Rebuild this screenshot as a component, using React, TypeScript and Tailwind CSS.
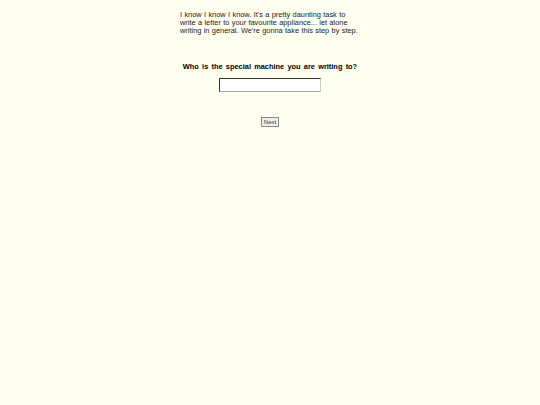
export default function App() {
  return (
    <div className="min-h-[405px] bg-[#fffff0] pt-[11px] font-['Liberation_Sans',Arial,sans-serif] text-black">
      <p className="mx-auto w-[180px] text-[7.4px] leading-[8px] text-[#222] [word-spacing:0.3px]">
        I know I know I know. It's a pretty daunting task to write a letter to your favourite appliance... let alone writing in general. We're gonna take this step by step.
      </p>
      <div className="mt-[27px] flex flex-col items-center">
        <h2 className="text-[7.4px] font-bold leading-[10px] [word-spacing:1.2px]">Who is the special machine you are writing to?</h2>
        <input
          type="text"
          className="mt-[6px] h-[14px] w-[102px] border border-t-[#333] border-l-[#333] border-b-[#aaa] border-r-[#ccc] bg-white"
        />
        <button className="mt-[25px] h-[10px] w-[18px] border border-[#888] bg-[#eee] text-[6px] leading-[8px] text-[#333]">
          Next
        </button>
      </div>
    </div>
  );
}
